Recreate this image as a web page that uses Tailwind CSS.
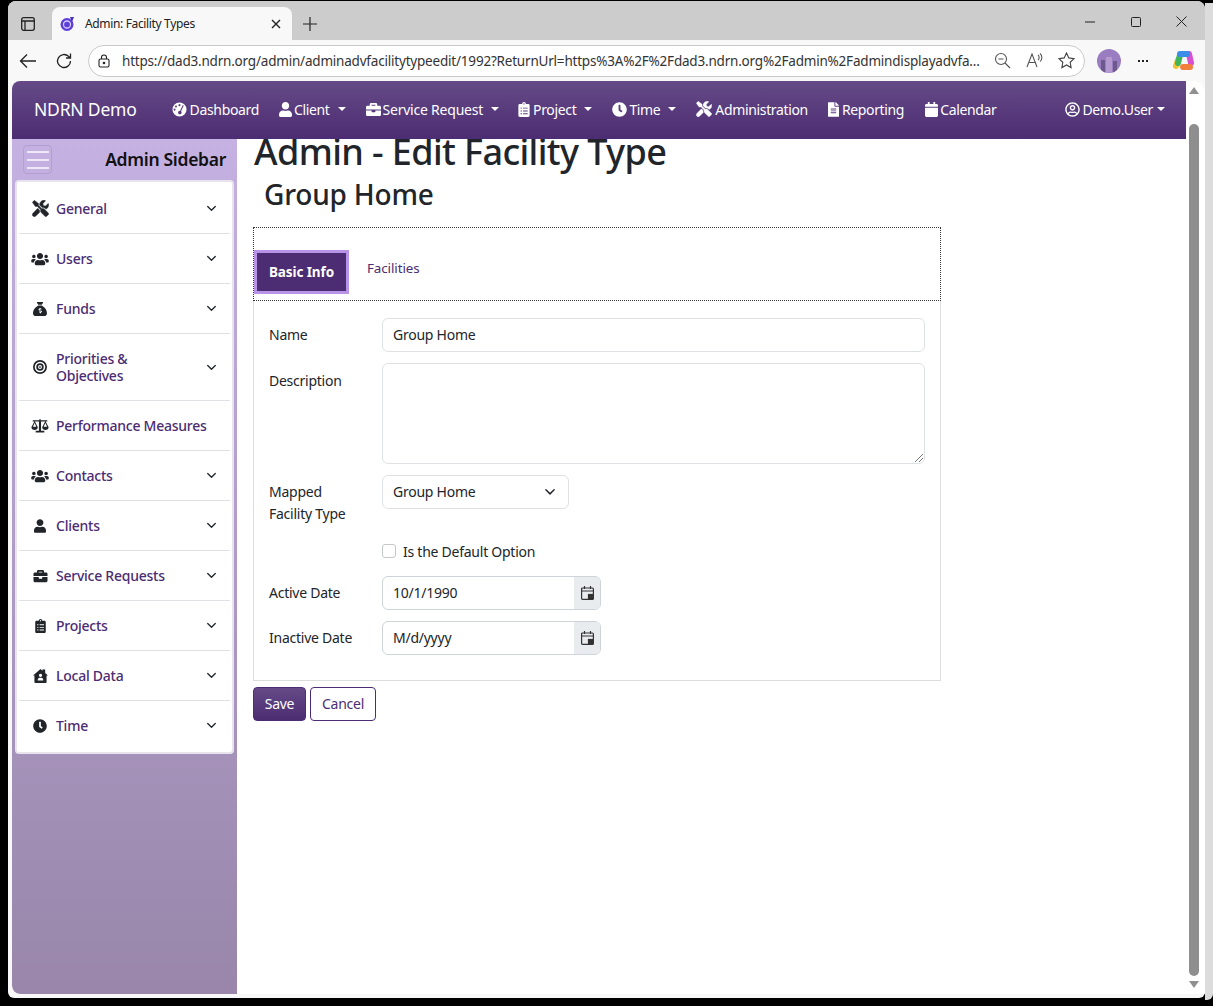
<!DOCTYPE html>
<html lang="en">
<head>
<meta charset="utf-8">
<title>Admin: Facility Types</title>
<script src="https://cdn.jsdelivr.net/npm/@tailwindcss/browser@4"></script>
</head>
<body class="bg-black overflow-hidden font-['Noto_Sans',sans-serif]">
<svg width="0" height="0" class="absolute">
  <defs>
    <symbol id="i-user" viewBox="0 0 448 512"><path d="M224 256c70.7 0 128-57.3 128-128S294.7 0 224 0 96 57.3 96 128s57.3 128 128 128zm89.6 32h-16.7c-22.2 10.2-46.9 16-72.9 16s-50.6-5.8-72.9-16h-16.7C60.2 288 0 348.2 0 422.4V464c0 26.5 21.5 48 48 48h352c26.5 0 48-21.5 48-48v-41.6c0-74.2-60.2-134.4-134.4-134.4z"/></symbol>
    <symbol id="i-clock" viewBox="0 0 512 512"><path d="M256,8C119,8,8,119,8,256S119,504,256,504,504,393,504,256,393,8,256,8Zm92.49,313h0l-20,25a16,16,0,0,1-22.49,2.5h0l-67-49.72a40,40,0,0,1-15-31.23V112a16,16,0,0,1,16-16h32a16,16,0,0,1,16,16V256l58,42.5A16,16,0,0,1,348.49,321Z"/></symbol>
    <symbol id="i-case" viewBox="0 0 512 512"><path d="M320 336c0 8.84-7.16 16-16 16h-96c-8.84 0-16-7.16-16-16v-48H0v144c0 25.6 22.4 48 48 48h416c25.6 0 48-22.4 48-48V288H320v48zm144-208h-80V80c0-25.6-22.4-48-48-48H176c-25.6 0-48 22.4-48 48v48H48c-25.6 0-48 22.4-48 48v80h512v-80c0-25.6-22.4-48-48-48zm-144 0H192V96h128v32z"/></symbol>
    <symbol id="i-users" viewBox="0 0 640 512"><path d="M96 224c35.3 0 64-28.7 64-64s-28.7-64-64-64-64 28.7-64 64 28.7 64 64 64zm448 0c35.3 0 64-28.7 64-64s-28.7-64-64-64-64 28.7-64 64 28.7 64 64 64zm32 32h-64c-17.6 0-33.5 7.1-45.1 18.6 40.3 22.1 68.9 62 75.1 109.4h66c17.7 0 32-14.3 32-32v-32c0-35.3-28.7-64-64-64zm-256 0c61.9 0 112-50.1 112-112S381.9 32 320 32 208 82.1 208 144s50.1 112 112 112zm76.8 32h-8.3c-20.8 10-43.9 16-68.5 16s-47.6-6-68.5-16h-8.3C179.6 288 128 339.6 128 403.2V432c0 26.5 21.5 48 48 48h288c26.5 0 48-21.5 48-48v-28.8c0-63.6-51.6-115.2-115.2-115.2zm-223.7-13.4C161.5 263.1 145.6 256 128 256H64c-35.3 0-64 28.7-64 64v32c0 17.7 14.3 32 32 32h65.9c6.3-47.4 34.9-87.3 75.2-109.4z"/></symbol>
    <symbol id="i-cal" viewBox="0 0 448 512"><path d="M12 192h424c6.6 0 12 5.4 12 12v260c0 26.5-21.5 48-48 48H48c-26.5 0-48-21.5-48-48V204c0-6.6 5.4-12 12-12zm436-44v-36c0-26.5-21.5-48-48-48h-48V12c0-6.6-5.4-12-12-12h-40c-6.6 0-12 5.4-12 12v52H160V12c0-6.6-5.4-12-12-12h-40c-6.6 0-12 5.4-12 12v52H48C21.5 64 0 85.5 0 112v36c0 6.6 5.4 12 12 12h424c6.6 0 12-5.4 12-12z"/></symbol>
    <symbol id="i-tools" viewBox="-10 -10 532 532"><path stroke-width="12" stroke-linejoin="round" d="M501.1 395.7L384 278.6c-23.1-23.1-57.6-27.6-85.4-13.9L192 158.1V96L64 0 0 64l96 128h62.1l106.6 106.6c-13.6 27.8-9.2 62.3 13.9 85.4l117.1 117.1c14.6 14.6 38.2 14.6 52.7 0l52.7-52.7c14.5-14.6 14.5-38.2 0-52.7zM331.7 225c28.3 0 54.9 11 74.9 31l19.4 19.4c15.8-6.9 30.8-16.5 43.8-29.5 37.1-37.1 49.7-89.3 37.9-136.7-2.2-9-13.5-12.1-20.1-5.5l-74.4 74.4-67.9-11.3L334 98.9l74.4-74.4c6.6-6.6 3.4-17.9-5.7-20.2-47.4-11.7-99.6.9-136.6 37.9-28.5 28.5-41.9 66.1-41.2 103.6l82.1 82.1c8.1-1.9 16.5-2.9 24.7-2.9zm-103.9 82l-56.7-56.7L18.7 402.8c-25 25-25 65.5 0 90.5s65.5 25 90.5 0l123.6-123.6c-7.6-19.9-9.9-41.6-5-62.7z"/></symbol>
    <symbol id="i-file" viewBox="0 0 384 512"><path d="M224 136V0H24C10.7 0 0 10.7 0 24v464c0 13.3 10.7 24 24 24h336c13.3 0 24-10.7 24-24V160H248c-13.2 0-24-10.8-24-24zm64 236c0 6.6-5.4 12-12 12H108c-6.6 0-12-5.4-12-12v-8c0-6.6 5.4-12 12-12h168c6.6 0 12 5.4 12 12v8zm0-64c0 6.6-5.4 12-12 12H108c-6.6 0-12-5.4-12-12v-8c0-6.6 5.4-12 12-12h168c6.6 0 12 5.4 12 12v8zm0-72v8c0 6.6-5.4 12-12 12H108c-6.6 0-12-5.4-12-12v-8c0-6.6 5.4-12 12-12h168c6.6 0 12 5.4 12 12zm96-114.1v6.1H256V0h6.1c6.4 0 12.5 2.5 17 7l97.9 98c4.5 4.5 7 10.6 7 16.9z"/></symbol>
    <symbol id="i-ucircle" viewBox="0 0 496 512"><path d="M248 104c-53 0-96 43-96 96s43 96 96 96 96-43 96-96-43-96-96-96zm0 144c-26.5 0-48-21.5-48-48s21.5-48 48-48 48 21.5 48 48-21.5 48-48 48zm0-240C111 8 0 119 0 256s111 248 248 248 248-111 248-248S385 8 248 8zm0 448c-49.7 0-95.1-18.3-130.1-48.400 14.9-23 40.4-38.6 69.6-39.500 20.8 6.4 40.6 9.6 60.5 9.6s39.7-3.1 60.5-9.600c29.2 1 54.7 16.5 69.6 39.500-35 30.100-80.400 48.400-130.100 48.400zm162.700-84.100c-24.400-31.400-62.100-51.900-105.100-51.900-10.200 0-26 9.600-57.600 9.600-31.500 0-47.400-9.600-57.600-9.600-42.900 0-80.600 20.500-105.100 51.900C61.900 339.200 48 299.300 48 256c0-110.300 89.700-200 200-200s200 89.700 200 200c0 43.300-13.900 83.200-37.300 115.900z"/></symbol>
    <symbol id="i-clip" viewBox="0 0 384 512"><path d="M336 64h-80c0-35.3-28.7-64-64-64s-64 28.7-64 64H48C21.5 64 0 85.5 0 112v352c0 26.5 21.5 48 48 48h288c26.5 0 48-21.5 48-48V112c0-26.5-21.5-48-48-48zM96 424c-13.3 0-24-10.7-24-24s10.7-24 24-24 24 10.7 24 24-10.7 24-24 24zm0-96c-13.3 0-24-10.7-24-24s10.7-24 24-24 24 10.7 24 24-10.7 24-24 24zm0-96c-13.3 0-24-10.7-24-24s10.7-24 24-24 24 10.7 24 24-10.7 24-24 24zm96-192c13.3 0 24 10.7 24 24s-10.7 24-24 24-24-10.7-24-24 10.7-24 24-24zm128 368c0 4.4-3.6 8-8 8H168c-4.4 0-8-3.6-8-8v-16c0-4.4 3.6-8 8-8h144c4.4 0 8 3.6 8 8v16zm0-96c0 4.4-3.6 8-8 8H168c-4.4 0-8-3.6-8-8v-16c0-4.4 3.6-8 8-8h144c4.4 0 8 3.6 8 8v16zm0-96c0 4.4-3.6 8-8 8H168c-4.4 0-8-3.6-8-8v-16c0-4.4 3.6-8 8-8h144c4.4 0 8 3.6 8 8v16z"/></symbol>
    <symbol id="i-gauge" viewBox="0 0 32 32"><path fill-rule="evenodd" d="M16 1a15 15 0 1 0 0 30a15 15 0 0 0 0-30zM16 4.500a2.200 2.200 0 1 1 0 4.400a2.200 2.200 0 0 1 0-4.400zM8.500 7.500a2.200 2.200 0 1 1 0 4.400a2.200 2.200 0 0 1 0-4.400zM5.500 14a2.200 2.200 0 1 1 0 4.400a2.200 2.200 0 0 1 0-4.400zM23 6.500l2 .8l-5.600 12.500a3.800 3.800 0 1 1-2.100-1z"/></symbol>
    <symbol id="i-chev" viewBox="0 0 16 16"><path fill="none" stroke="#212529" stroke-width="1.900" stroke-linecap="round" stroke-linejoin="round" d="M2.500 5L8 10.500L13.500 5"/></symbol>
    <symbol id="i-bag" viewBox="0 0 512 512"><path fill-rule="evenodd" d="M320 96H192L144.600 24.900C137.500 14.200 145.100 0 157.900 0H354.100c12.800 0 20.400 14.200 13.300 24.900L320 96zM192 128H320c3.800 2.500 8.100 5.300 13 8.400C389.700 172.700 512 250.900 512 416c0 53-43 96-96 96H96c-53 0-96-43-96-96C0 250.900 122.300 172.700 179 136.400c4.800-3.100 9.200-5.900 13-8.400zM240 216v24c-34 6-52 50-16 68l56 18c14 8 6 24-10 24h-48v36h34v24h36v-24c36-6 52-52 16-70l-56-18c-14-8-6-22 10-22h44v-36h-30v-24z"/></symbol>
    <symbol id="i-target" viewBox="0 0 32 32"><path fill-rule="evenodd" d="M16 0a16 16 0 1 0 0 32a16 16 0 0 0 0-32zM16 4a12 12 0 1 1 0 24a12 12 0 0 1 0-24zM16 7.500a8.500 8.500 0 1 0 0 17a8.500 8.500 0 0 0 0-17zM16 11.500a4.500 4.500 0 1 1 0 9a4.500 4.500 0 0 1 0-9zM16 14a2 2 0 1 0 0 4a2 2 0 0 0 0-4z"/></symbol>
    <symbol id="i-scale" viewBox="0 0 32 26"><path fill-rule="evenodd" d="M15 0h2v2.500l12.500 0v2h-3l5.500 11c0 3-2.500 5-6 5s-6-2-6-5l5.500-11H18v17.500h6v3H8v-3h6V4.500H6.500l5.500 11c0 3-2.500 5-6 5s-6-2-6-5l5.500-11h-3v-2H15zM6 7.500L2.800 14.500h6.400zM26 7.500l-3.200 7h6.400z"/></symbol>
    <symbol id="i-house" viewBox="0 0 32 30"><path fill-rule="evenodd" d="M16 0L20 3.500V1h6v7.500l6 5.500h-3v14a2 2 0 0 1-2 2H5a2 2 0 0 1-2-2V14H0zM16 10a3.500 3.500 0 1 0 0 7a3.500 3.500 0 0 0 0-7zM10 24.500h12c0-3.500-2-5.500-4-5.500h-4c-2 0-4 2-4 5.500z"/></symbol>
  </defs>
</svg>

<div class="flex w-[1213px] h-[1006px]">
  <div class="w-[8px] shrink-0"></div>
  <div class="w-[1197px] h-[997px] mt-[1px] rounded-t-lg rounded-b-md overflow-hidden flex flex-col bg-[#f8f8f8] shrink-0">
    <!-- tab strip -->
    <div class="h-[39px] bg-[#cccccc] flex items-end shrink-0">
      <svg class="w-[14px] h-[14px] ml-[13px] mb-[9px]" viewBox="0 0 14 14" fill="none" stroke="#222" stroke-width="1.300"><rect x=".7" y=".7" width="12.600" height="12.600" rx="2"/><path d="M.7 4h12.600M4 4v9.300" /></svg>
      <div class="ml-[17px] w-[240px] h-[33px] bg-[#f8f8f8] rounded-t-lg flex items-center">
        <svg class="w-[16px] h-[16px] ml-[7px]" viewBox="0 0 16 16"><circle cx="8" cy="8.500" r="6.500" fill="#5b3fd6"/><circle cx="8" cy="8.500" r="3.500" fill="none" stroke="#d9c9ff" stroke-width="1.300"/><path d="M11 1h4l-2 5z" fill="#4a2fb8"/></svg>
        <span class="ml-[10px] text-[12px] text-[#222] tracking-[-0.35px] whitespace-nowrap">Admin: Facility Types</span>
        <svg class="w-[10px] h-[10px] ml-auto mr-[11px]" viewBox="0 0 10 10" stroke="#222" stroke-width="1.400"><path d="M1 1l8 8M9 1l-8 8"/></svg>
      </div>
      <svg class="w-[14px] h-[14px] ml-[11px] mb-[9px]" viewBox="0 0 14 14" stroke="#222" stroke-width="1.200"><path d="M7 0v14M0 7h14"/></svg>
      <div class="ml-auto flex items-center mb-[13px] mr-[18px]">
        <svg class="w-[10px] h-[10px]" viewBox="0 0 10 10" stroke="#222" stroke-width="1"><path d="M0 5h10"/></svg>
        <svg class="w-[10px] h-[10px] ml-[36px]" viewBox="0 0 10 10" fill="none" stroke="#222" stroke-width="1"><rect x=".5" y=".5" width="9" height="9" rx="1"/></svg>
        <svg class="w-[11px] h-[11px] ml-[35px]" viewBox="0 0 11 11" stroke="#222" stroke-width="1"><path d="M.5.500l10 10M10.500.500l-10 10"/></svg>
      </div>
    </div>
    <!-- address bar -->
    <div class="h-[41px] pt-[1px] bg-[#f8f8f8] flex items-center shrink-0 relative">
      <svg class="w-[18px] h-[16px] ml-[11px]" viewBox="0 0 18 16" fill="none" stroke="#222" stroke-width="1.300"><path d="M17 8H1.500M8 1.500L1.500 8L8 14.500"/></svg>
      <svg class="w-[18px] h-[18px] ml-[18px]" viewBox="0 0 18 18" fill="none" stroke="#222" stroke-width="1.300"><path d="M15.500 9a6.500 6.500 0 1 1-2-4.700L15.500 6M15.500 1.500V6H11"/></svg>
      <div class="ml-[15px] w-[997px] h-[32px] bg-white border border-[#c9c9c9] rounded-full flex items-center shrink-0">
        <svg class="w-[12px] h-[14px] ml-[9px]" viewBox="0 0 12 14" fill="none" stroke="#222" stroke-width="1.100"><rect x="1" y="5" width="10" height="8" rx="1.500"/><path d="M3.500 5V3.500a2.500 2.500 0 0 1 5 0V5"/><circle cx="6" cy="9" r=".8" fill="#222"/></svg>
        <span class="ml-[12px] text-[13.500px] text-[#333] whitespace-nowrap tracking-[-0.2px]">https://dad3.ndrn.org/admin/adminadvfacilitytypeedit/1992?ReturnUrl=https%3A%2F%2Fdad3.ndrn.org%2Fadmin%2Fadmindisplayadvfa...</span>
      </div>
      <svg class="absolute left-[986px] top-[12px] w-[17px] h-[17px]" viewBox="0 0 17 17" fill="none" stroke="#555" stroke-width="1.100"><circle cx="7" cy="7" r="5.500"/><path d="M4.500 7h5M11 11l5 5"/></svg>
      <svg class="absolute left-[1018px] top-[12px] w-[18px] h-[17px]" viewBox="0 0 18 17" fill="none" stroke="#555" stroke-width="1.100"><path d="M1 15L6 2l5 13M3 10.500h6M12 3c1.500 1 1.500 4 0 5M14 1.500c2.500 2 2.500 6 0 8"/></svg>
      <svg class="absolute left-[1050px] top-[12px] w-[17px] h-[17px]" viewBox="0 0 17 17" fill="none" stroke="#444" stroke-width="1.100"><path d="M8.500 1l2.300 4.900 5.200.7-3.800 3.700.9 5.300-4.600-2.600-4.600 2.600.9-5.300L1 6.600l5.200-.7z"/></svg>
      <div class="absolute left-[1089px] top-[9px] w-[24px] h-[24px] rounded-full bg-[#9a7cc0] overflow-hidden flex items-end justify-center gap-[1px]">
        <div class="w-[4px] h-[13px] bg-[#6d5a8c]"></div><div class="w-[6px] h-[16px] bg-[#b49ad0]"></div><div class="w-[4px] h-[12px] bg-[#6d5a8c]"></div>
      </div>
      <div class="absolute left-[1130px] top-[20px] flex gap-[2px]"><div class="w-[2px] h-[2px] bg-[#222]"></div><div class="w-[2px] h-[2px] bg-[#222]"></div><div class="w-[2px] h-[2px] bg-[#222]"></div></div>
      <svg class="absolute left-[1164px] top-[10px] w-[23px] h-[22px]" viewBox="0 0 23 22" fill="none" stroke-width="6" stroke-linecap="round"><path d="M17 4l2 9" stroke="#d84fd0"/><path d="M18 17h-7" stroke="#f0803c"/><path d="M4 16l2-6" stroke="#f2c230"/><path d="M6 13l2-8" stroke="#3fb55a"/><path d="M8 4h7" stroke="#3a8ee8"/></svg>
    </div>
    <!-- page -->
    <div class="flex-1 min-h-0 flex pl-[4px] pb-[4px]">
      <div class="flex-1 min-w-0 bg-white rounded-tr-xl rounded-bl-lg flex overflow-hidden">
        <div class="flex-1 min-w-0 flex flex-col">
          <!-- nav -->
          <nav class="h-[58px] pb-[2px] shrink-0 relative z-10 rounded-tl-lg bg-linear-to-b from-[#654a87] to-[#4c2c72] flex items-center text-white text-[14px] whitespace-nowrap tracking-[-0.35px]">
            <span class="ml-[22px] text-[17.500px] tracking-[-0.2px]">NDRN Demo</span>
            <div class="ml-[35px] flex items-center gap-[3px]"><svg class="w-[15px] h-[15px] fill-white"><use href="#i-gauge"/></svg><span>Dashboard</span></div>
            <div class="ml-[20px] flex items-center gap-[2px]"><svg class="w-[13px] h-[15px] fill-white"><use href="#i-user"/></svg><span>Client</span><span class="ml-[6px] border-x-[4px] border-t-[4px] border-x-transparent border-t-white"></span></div>
            <div class="ml-[20px] flex items-center gap-[2px]"><svg class="w-[15px] h-[15px] fill-white"><use href="#i-case"/></svg><span class="tracking-[-0.22px]">Service Request</span><span class="ml-[6px] border-x-[4px] border-t-[4px] border-x-transparent border-t-white"></span></div>
            <div class="ml-[19px] flex items-center gap-[3px]"><svg class="w-[12px] h-[15px] fill-white"><use href="#i-clip"/></svg><span>Project</span><span class="ml-[5px] border-x-[4px] border-t-[4px] border-x-transparent border-t-white"></span></div>
            <div class="ml-[20px] flex items-center gap-[2px]"><svg class="w-[15px] h-[15px] fill-white"><use href="#i-clock"/></svg><span>Time</span><span class="ml-[6px] border-x-[4px] border-t-[4px] border-x-transparent border-t-white"></span></div>
            <div class="ml-[20px] flex items-center gap-[3px]"><svg class="w-[16px] h-[16px] fill-white stroke-white"><use href="#i-tools"/></svg><span>Administration</span></div>
            <div class="ml-[20px] flex items-center gap-[3px]"><svg class="w-[11px] h-[15px] fill-white"><use href="#i-file"/></svg><span>Reporting</span></div>
            <div class="ml-[21px] flex items-center gap-[2px]"><svg class="w-[13px] h-[15px] fill-white"><use href="#i-cal"/></svg><span>Calendar</span></div>
            <div class="ml-auto mr-[21px] flex items-center gap-[2px]"><svg class="w-[15px] h-[15px] fill-white"><use href="#i-ucircle"/></svg><span>Demo.User</span><span class="ml-[2px] border-x-[4px] border-t-[4px] border-x-transparent border-t-white"></span></div>
          </nav>
          <div class="flex-1 min-h-0 flex">
            <!-- sidebar -->
            <aside class="w-[225px] shrink-0 rounded-bl-lg bg-linear-to-b from-[#c5b1e2] to-[#9986aa] flex flex-col px-[3px]">
              <div class="h-[41px] shrink-0 flex items-center justify-between pl-[9px] pr-[8px]">
                <div class="-ml-[1px] w-[29px] h-[29px] rounded border border-[#b49fd2] flex flex-col items-center justify-center gap-[6px]"><div class="w-[22px] h-[2px] bg-white/70"></div><div class="w-[22px] h-[2px] bg-white/70"></div><div class="w-[22px] h-[2px] bg-white/70"></div></div>
                <span class="text-[17.500px] font-semibold text-[#111] tracking-[-0.3px] whitespace-nowrap">Admin Sidebar</span>
              </div>
              <div class="bg-white rounded border-2 border-[#e8e4ee] px-[2px] pt-[2px] pb-[1px] text-[#4c2c72] text-[14px] font-medium tracking-[-0.25px]">
                <div class="h-[50px] border-b border-[#dee2e6] flex items-center pl-[12px] pr-[13px]"><span class="w-[18px] flex justify-center"><svg class="w-[17px] h-[17px] fill-[#212529] stroke-[#212529]"><use href="#i-tools"/></svg></span><span class="ml-[7px]">General</span><svg class="w-[11px] h-[11px] ml-auto"><use href="#i-chev"/></svg></div>
                <div class="h-[50px] border-b border-[#dee2e6] flex items-center pl-[12px] pr-[13px]"><span class="w-[18px] flex justify-center"><svg class="w-[18px] h-[14px] fill-[#212529]"><use href="#i-users"/></svg></span><span class="ml-[7px]">Users</span><svg class="w-[11px] h-[11px] ml-auto"><use href="#i-chev"/></svg></div>
                <div class="h-[50px] border-b border-[#dee2e6] flex items-center pl-[12px] pr-[13px]"><span class="w-[18px] flex justify-center"><svg class="w-[14px] h-[14px] fill-[#212529]"><use href="#i-bag"/></svg></span><span class="ml-[7px]">Funds</span><svg class="w-[11px] h-[11px] ml-auto"><use href="#i-chev"/></svg></div>
                <div class="h-[67px] border-b border-[#dee2e6] flex items-center pl-[12px] pr-[13px]"><span class="w-[18px] flex justify-center"><svg class="w-[14px] h-[14px] fill-[#212529]"><use href="#i-target"/></svg></span><span class="ml-[7px] leading-[17px] w-[110px]">Priorities &amp; Objectives</span><svg class="w-[11px] h-[11px] ml-auto"><use href="#i-chev"/></svg></div>
                <div class="h-[50px] border-b border-[#dee2e6] flex items-center pl-[12px] pr-[13px]"><span class="w-[18px] flex justify-center"><svg class="w-[18px] h-[14px] fill-[#212529]"><use href="#i-scale"/></svg></span><span class="ml-[7px] whitespace-nowrap">Performance Measures</span></div>
                <div class="h-[50px] border-b border-[#dee2e6] flex items-center pl-[12px] pr-[13px]"><span class="w-[18px] flex justify-center"><svg class="w-[18px] h-[14px] fill-[#212529]"><use href="#i-users"/></svg></span><span class="ml-[7px]">Contacts</span><svg class="w-[11px] h-[11px] ml-auto"><use href="#i-chev"/></svg></div>
                <div class="h-[50px] border-b border-[#dee2e6] flex items-center pl-[12px] pr-[13px]"><span class="w-[18px] flex justify-center"><svg class="w-[12px] h-[14px] fill-[#212529]"><use href="#i-user"/></svg></span><span class="ml-[7px]">Clients</span><svg class="w-[11px] h-[11px] ml-auto"><use href="#i-chev"/></svg></div>
                <div class="h-[50px] border-b border-[#dee2e6] flex items-center pl-[12px] pr-[13px]"><span class="w-[18px] flex justify-center"><svg class="w-[15px] h-[14px] fill-[#212529]"><use href="#i-case"/></svg></span><span class="ml-[7px]">Service Requests</span><svg class="w-[11px] h-[11px] ml-auto"><use href="#i-chev"/></svg></div>
                <div class="h-[50px] border-b border-[#dee2e6] flex items-center pl-[12px] pr-[13px]"><span class="w-[18px] flex justify-center"><svg class="w-[11px] h-[14px] fill-[#212529]"><use href="#i-clip"/></svg></span><span class="ml-[7px]">Projects</span><svg class="w-[11px] h-[11px] ml-auto"><use href="#i-chev"/></svg></div>
                <div class="h-[50px] border-b border-[#dee2e6] flex items-center pl-[12px] pr-[13px]"><span class="w-[18px] flex justify-center"><svg class="w-[15px] h-[14px] fill-[#212529]"><use href="#i-house"/></svg></span><span class="ml-[7px]">Local Data</span><svg class="w-[11px] h-[11px] ml-auto"><use href="#i-chev"/></svg></div>
                <div class="h-[50px] border-b border-transparent flex items-center pl-[12px] pr-[13px]"><span class="w-[18px] flex justify-center"><svg class="w-[14px] h-[14px] fill-[#212529]"><use href="#i-clock"/></svg></span><span class="ml-[7px]">Time</span><svg class="w-[11px] h-[11px] ml-auto"><use href="#i-chev"/></svg></div>
              </div>
            </aside>
            <!-- main -->
            <main class="flex-1 min-w-0 pl-[16px] text-[#212529] text-[14px] tracking-[-0.25px]">
              <h1 class="-mt-[9px] ml-[1px] text-[36px] leading-[43px] font-medium whitespace-nowrap tracking-[-0.6px]">Admin - Edit Facility Type</h1>
              <h2 class="mt-[1px] ml-[11px] text-[28px] leading-[40px] font-medium whitespace-nowrap tracking-[-0.2px]">Group Home</h2>
              <div class="mt-[13px] w-[688px]">
                <div class="h-[74px] border border-dotted border-[#333] flex pt-[22px] items-start">
                  <div class="w-[95px] h-[44px] bg-[#4c2c72] border-[3px] border-[#b794e8] flex items-center justify-center text-white font-bold text-[13.500px] tracking-[-0.1px]">Basic Info</div>
                  <div class="ml-[18px] mt-[8px] text-[#4c2c72] text-[13.400px] tracking-[-0.1px]">Facilities</div>
                </div>
                <div class="h-[380px] border border-t-0 border-[#dddddd] pl-[15px] pt-[17px]">
                  <div class="flex h-[34px] items-center"><span class="w-[113px] -mt-[2px]">Name</span><div class="w-[543px] h-[34px] border border-[#dee2e6] rounded-md flex items-center pl-[10px] pb-[2px]">Group Home</div></div>
                  <div class="flex mt-[11px] items-start"><span class="w-[113px] mt-[7px]">Description</span><div class="w-[543px] h-[101px] border border-[#dee2e6] rounded-md relative"><svg class="absolute right-[1px] bottom-[1px] w-[9px] h-[9px]" viewBox="0 0 9 9" stroke="#777" stroke-width="1"><path d="M1 9l8-8M5 9l4-4"/></svg></div></div>
                  <div class="flex mt-[11px] items-start"><span class="w-[113px] leading-[22px] mt-[6px]">Mapped<br>Facility Type</span><div class="w-[187px] h-[34px] border border-[#dee2e6] rounded-md flex items-center pl-[10px] pb-[2px]">Group Home<svg class="w-[12px] h-[12px] ml-auto mr-[12px] mt-[2px]"><use href="#i-chev"/></svg></div></div>
                  <div class="flex items-center mt-[19px] ml-[113px] h-[14px]"><span class="w-[14px] h-[14px] border border-[#c4c8cc] rounded-[3px]"></span><span class="ml-[7px]">Is the Default Option</span></div>
                  <div class="flex mt-[18px] h-[34px] items-center"><span class="w-[113px] -mt-[2px]">Active Date</span><div class="w-[219px] h-[34px] border border-[#ced4da] rounded-md overflow-hidden flex items-center pl-[10px]"><span class="-mt-[2px]">10/1/1990</span><span class="ml-auto w-[26px] h-full bg-[#e9ecef] flex items-center justify-center"><svg class="w-[13px] h-[14px]" viewBox="0 0 13 14" fill="none" stroke="#333" stroke-width="1.200"><rect x=".6" y="2" width="11.800" height="11.400" rx="1"/><path d="M.6 5h11.800M3.500 0v3M9.500 0v3"/><rect x="7.500" y="8.500" width="4" height="4" fill="#333"/></svg></span></div></div>
                  <div class="flex mt-[11px] h-[34px] items-center"><span class="w-[113px] -mt-[2px]">Inactive Date</span><div class="w-[219px] h-[34px] border border-[#ced4da] rounded-md overflow-hidden flex items-center pl-[10px]"><span class="-mt-[2px]">M/d/yyyy</span><span class="ml-auto w-[26px] h-full bg-[#e9ecef] flex items-center justify-center"><svg class="w-[13px] h-[14px]" viewBox="0 0 13 14" fill="none" stroke="#333" stroke-width="1.200"><rect x=".6" y="2" width="11.800" height="11.400" rx="1"/><path d="M.6 5h11.800M3.500 0v3M9.500 0v3"/><rect x="7.500" y="8.500" width="4" height="4" fill="#333"/></svg></span></div></div>
                </div>
                <div class="flex mt-[6px] gap-[4px]">
                  <div class="w-[53px] h-[34px] pb-[2px] rounded bg-linear-to-b from-[#654a87] to-[#4c2c72] border border-[#4c2c72] text-white flex items-center justify-center">Save</div>
                  <div class="w-[66px] h-[34px] pb-[2px] rounded bg-white border border-[#4c2c72] text-[#4c2c72] flex items-center justify-center">Cancel</div>
                </div>
              </div>
            </main>
          </div>
        </div>
        <!-- scrollbar -->
        <div class="w-[17px] shrink-0 bg-white relative mr-[2px]">
          <div class="absolute left-[3px] top-[6px] border-x-[5px] border-b-[7px] border-x-transparent border-b-[#909090]"></div>
          <div class="absolute left-[3px] top-[43px] w-[10px] h-[852px] rounded-full bg-[#8e8e8e]"></div>
          <div class="absolute left-[3px] bottom-[6px] border-x-[5px] border-t-[7px] border-x-transparent border-t-[#909090]"></div>
        </div>
      </div>
    </div>
  </div>
  <div class="w-[8px] h-[997px] mt-[3px] bg-[#dcdcdc] rounded-br-md shrink-0"></div>
</div>
</body>
</html>
